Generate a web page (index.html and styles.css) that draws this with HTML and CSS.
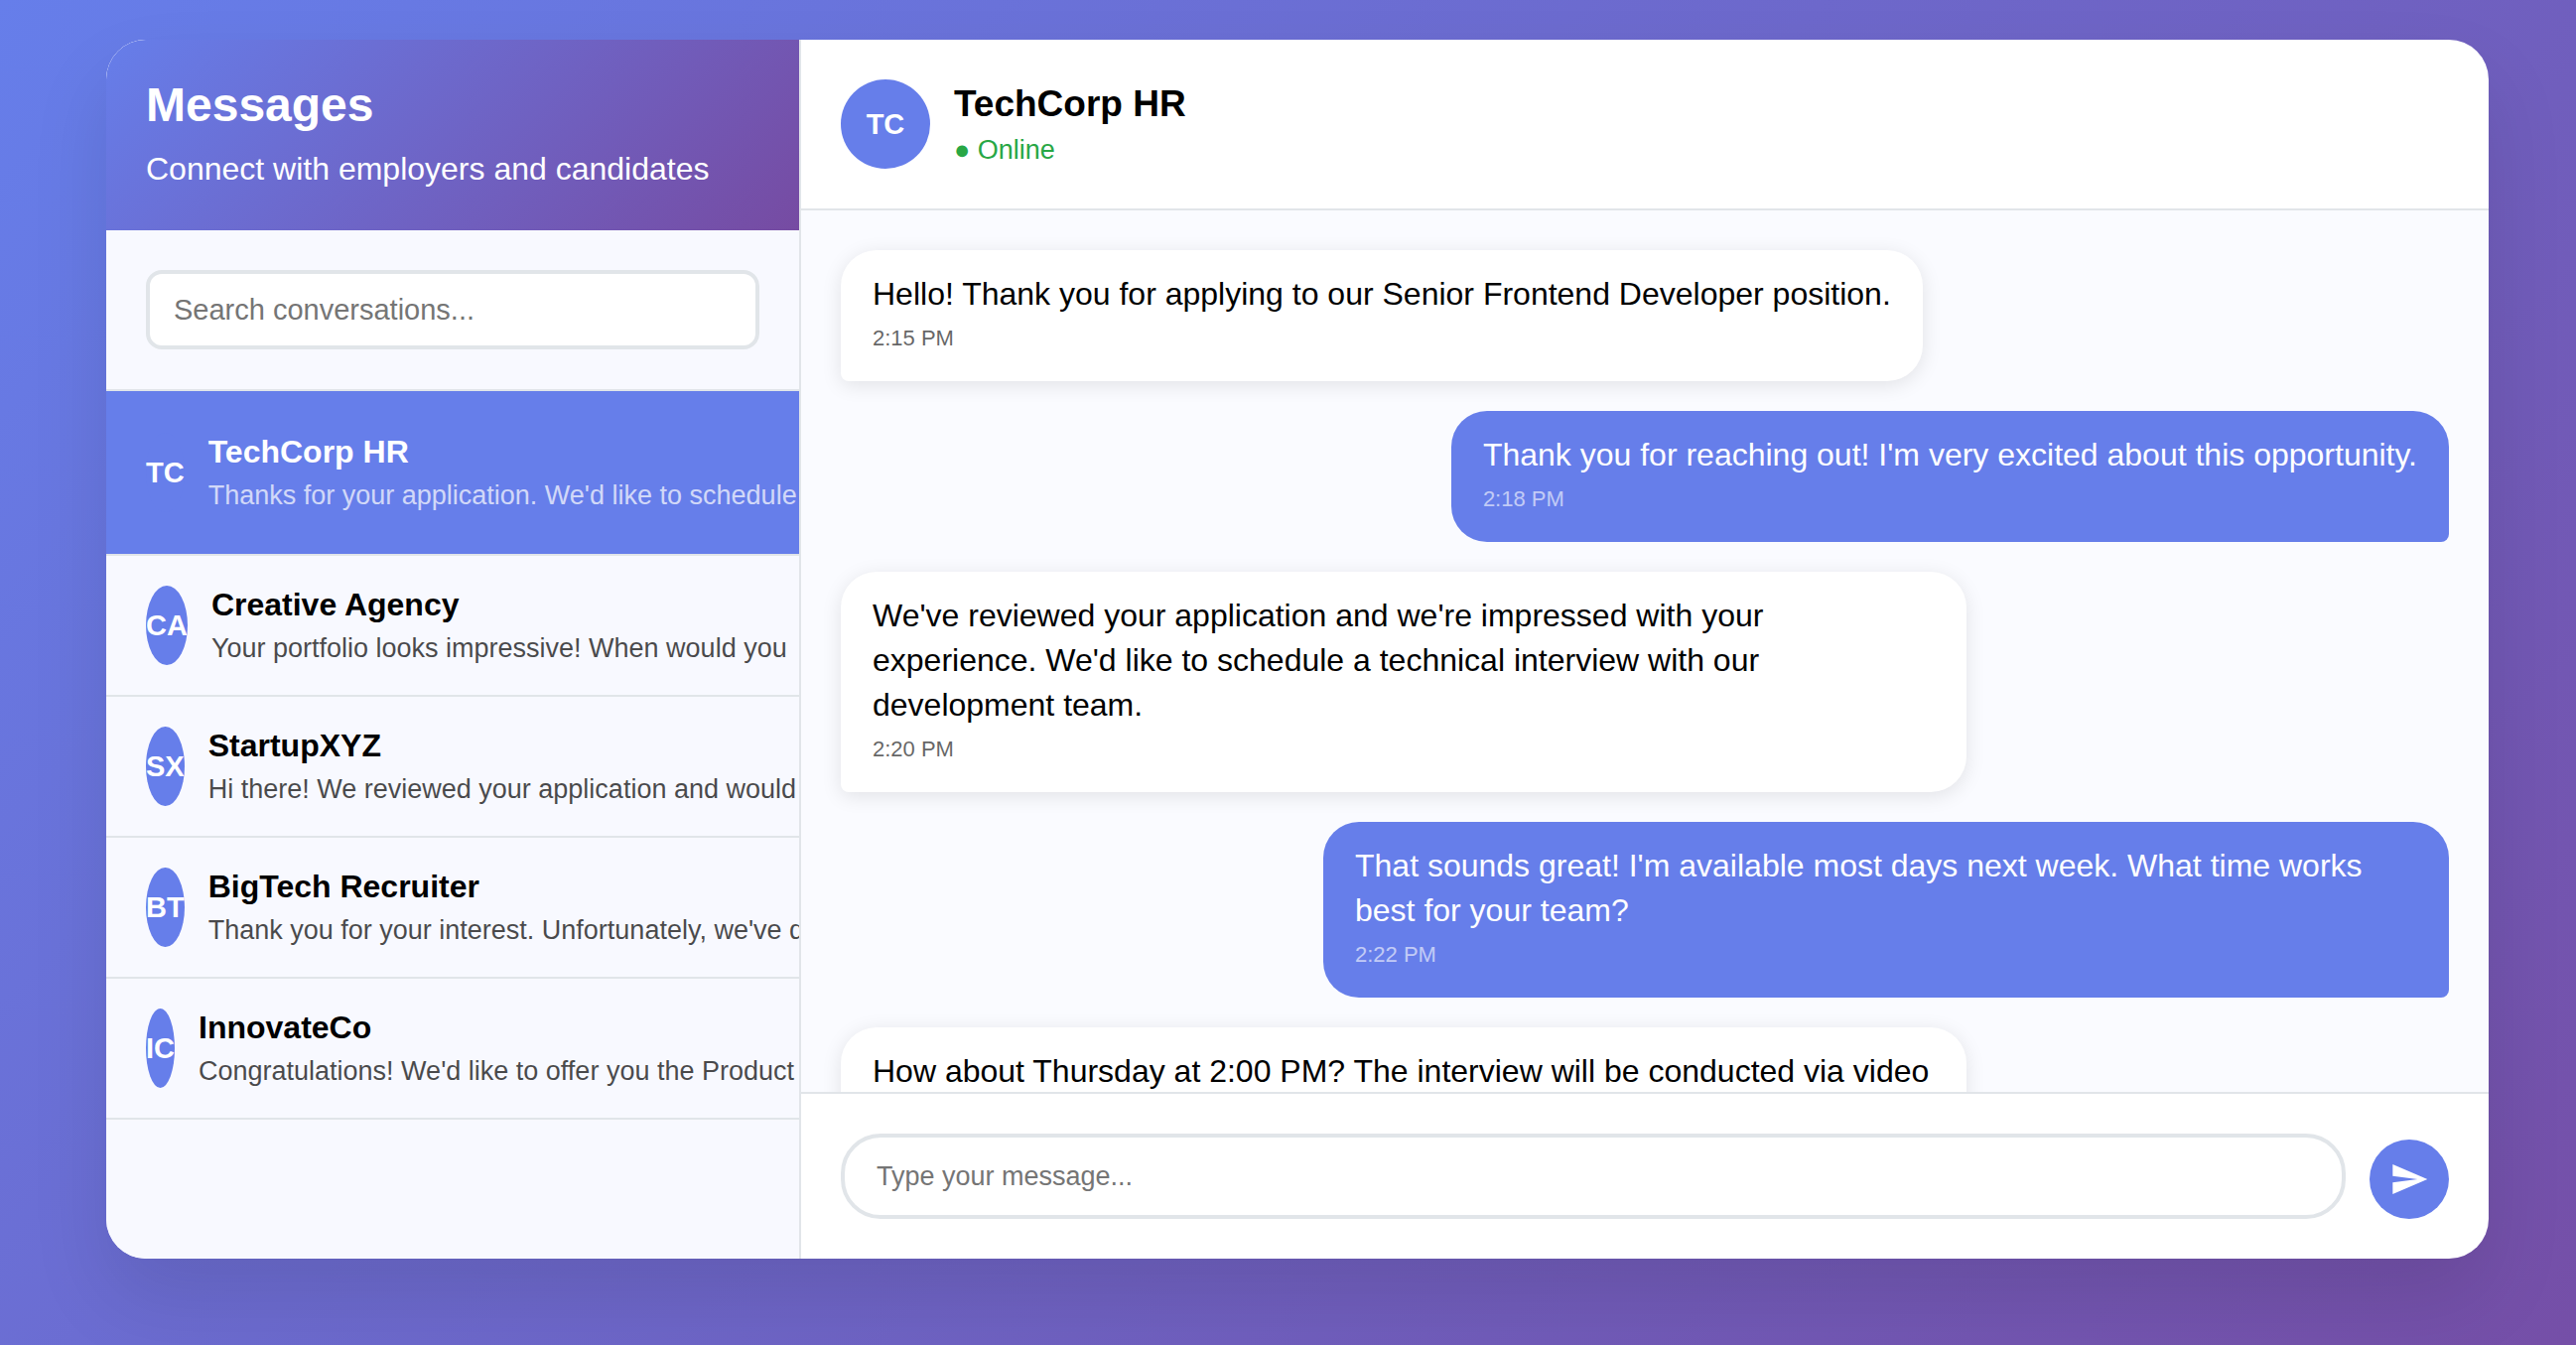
FILE: index.html
```html
<!DOCTYPE html>
<html lang="en">
<head>
  <meta charset="utf-8">
  <meta name="viewport" content="width=device-width, initial-scale=1">
  <title>Messages</title>
  <link rel="stylesheet" href="styles.css">
</head>
<body>
  <main class="messenger">
    <aside class="sidebar">
      <header class="sidebar-header">
        <h1 class="sidebar-title">Messages</h1>
        <p class="sidebar-subtitle">Connect with employers and candidates</p>
      </header>
      <div class="search">
        <input class="search-input" type="text" placeholder="Search conversations..." aria-label="Search conversations">
      </div>
      <ul class="conversations">
        <li>
          <button class="conversation conversation-active" type="button">
            <span class="avatar">TC</span>
            <span class="conversation-info">
              <span class="conversation-name">TechCorp HR</span>
              <span class="conversation-preview">Thanks for your application. We'd like to schedule</span>
            </span>
          </button>
        </li>
        <li>
          <button class="conversation" type="button">
            <span class="avatar">CA</span>
            <span class="conversation-info">
              <span class="conversation-name">Creative Agency</span>
              <span class="conversation-preview">Your portfolio looks impressive! When would you</span>
            </span>
          </button>
        </li>
        <li>
          <button class="conversation" type="button">
            <span class="avatar">SX</span>
            <span class="conversation-info">
              <span class="conversation-name">StartupXYZ</span>
              <span class="conversation-preview">Hi there! We reviewed your application and would</span>
            </span>
          </button>
        </li>
        <li>
          <button class="conversation" type="button">
            <span class="avatar">BT</span>
            <span class="conversation-info">
              <span class="conversation-name">BigTech Recruiter</span>
              <span class="conversation-preview">Thank you for your interest. Unfortunately, we've decided</span>
            </span>
          </button>
        </li>
        <li>
          <button class="conversation" type="button">
            <span class="avatar">IC</span>
            <span class="conversation-info">
              <span class="conversation-name">InnovateCo</span>
              <span class="conversation-preview">Congratulations! We'd like to offer you the Product</span>
            </span>
          </button>
        </li>
      </ul>
    </aside>

    <section class="chat">
      <header class="chat-header">
        <span class="avatar avatar-large">TC</span>
        <div class="chat-info">
          <h2 class="chat-name">TechCorp HR</h2>
          <p class="chat-status">● Online</p>
        </div>
      </header>

      <div class="messages">
        <div class="message message-received">
          <p class="message-text">Hello! Thank you for applying to our Senior Frontend Developer position.</p>
          <time class="message-time">2:15 PM</time>
        </div>
        <div class="message message-sent">
          <p class="message-text">Thank you for reaching out! I'm very excited about this opportunity.</p>
          <time class="message-time">2:18 PM</time>
        </div>
        <div class="message message-received">
          <p class="message-text">We've reviewed your application and we're impressed with your experience. We'd like to schedule a technical interview with our development team.</p>
          <time class="message-time">2:20 PM</time>
        </div>
        <div class="message message-sent">
          <p class="message-text">That sounds great! I'm available most days next week. What time works best for your team?</p>
          <time class="message-time">2:22 PM</time>
        </div>
        <div class="message message-received">
          <p class="message-text">How about Thursday at 2:00 PM? The interview will be conducted via video call.</p>
        </div>
      </div>

      <form class="composer">
        <textarea class="composer-input" rows="1" placeholder="Type your message..." aria-label="Message"></textarea>
        <button class="send-button" type="button" aria-label="Send message">
          <svg class="send-icon" viewBox="0 0 24 24" aria-hidden="true"><path d="M2.01 21L23 12 2.01 3 2 10l15 2-15 2z"/></svg>
        </button>
      </form>
    </section>
  </main>
</body>
</html>
```
FILE: styles.css
```css
* {
  box-sizing: border-box;
  margin: 0;
  padding: 0;
}

body {
  display: flex;
  justify-content: center;
  height: 100vh;
  padding: 40px 40px 87px 59px;
  background: linear-gradient(135deg, #667eea 0%, #764ba2 108%);
  color: #000;
  font-family: "Liberation Sans", Arial, sans-serif;
  font-size: 32px;
}

button,
input,
textarea {
  font-family: inherit;
}

.messenger {
  display: grid;
  grid-template-columns: 700px minmax(0, 1fr);
  grid-template-rows: minmax(0, 1fr);
  width: 100%;
  max-width: 2400px;
  overflow: hidden;
  border-radius: 40px;
  background: #fff;
  box-shadow: 0 40px 80px rgba(0, 0, 0, 0.1);
}

/* Sidebar */

.sidebar {
  display: flex;
  flex-direction: column;
  overflow: hidden;
  border-right: 2px solid #e1e5e9;
  background: #f8f9ff;
}

.sidebar-header {
  padding: 40px;
  background: linear-gradient(135deg, #667eea 0%, #764ba2 100%);
  color: #fff;
}

.sidebar-title {
  margin-bottom: 16px;
  font-size: 48px;
  line-height: 52px;
}

.sidebar-subtitle {
  line-height: 44px;
}

.search {
  padding: 40px;
  border-bottom: 2px solid #e1e5e9;
}

.search-input {
  display: block;
  width: 100%;
  height: 80px;
  padding: 0 24px;
  border: 4px solid #e1e5e9;
  border-radius: 16px;
  background: #fff;
  font-size: 29px;
}

.search-input::placeholder,
.composer-input::placeholder {
  color: #757575;
}

.conversations {
  list-style: none;
}

.conversation {
  display: flex;
  align-items: center;
  gap: 24px;
  width: 100%;
  padding: 30px 40px;
  border: 0;
  border-bottom: 2px solid #e1e5e9;
  background: none;
  color: inherit;
  font-size: 32px;
  text-align: left;
  cursor: pointer;
}

.conversation-active {
  padding-block: 42px;
  background: #667eea;
  color: #fff;
}

.avatar {
  display: flex;
  align-items: center;
  justify-content: center;
  width: 80px;
  height: 80px;
  border-radius: 50%;
  background: #667eea;
  color: #fff;
  font-size: 29px;
  font-weight: bold;
}

.avatar-large {
  width: 90px;
  height: 90px;
}

.conversation-info {
  display: flex;
  flex-direction: column;
  gap: 10px;
}

.conversation-name {
  font-weight: bold;
  line-height: 36px;
}

.conversation-preview {
  font-size: 27px;
  line-height: 32px;
  white-space: nowrap;
  opacity: 0.7;
}

/* The previews are nowrap, so the avatars shrink to their initials. */
.conversation .avatar {
  flex: 0 1000 80px;
}

/* Chat */

.chat {
  display: flex;
  flex-direction: column;
  overflow: hidden;
}

.chat-header {
  display: flex;
  align-items: center;
  gap: 24px;
  padding: 40px;
  border-bottom: 2px solid #e1e5e9;
}

.chat-info {
  display: flex;
  flex-direction: column;
  gap: 8px;
}

.chat-name {
  font-size: 37px;
  line-height: 44px;
}

.chat-status {
  color: #28a745;
  font-size: 27px;
  line-height: 32px;
}

.messages {
  display: flex;
  flex: 1;
  flex-direction: column;
  gap: 30px;
  min-height: 0;
  padding: 40px;
  overflow: hidden;
  background: #fafbff;
}

.message {
  flex-shrink: 0;
  max-width: 70%;
  padding: 22px 32px 28px;
  border-radius: 36px;
}

.message-received {
  align-self: flex-start;
  border-bottom-left-radius: 8px;
  background: #fff;
  box-shadow: 0 4px 20px rgba(0, 0, 0, 0.1);
}

.message-sent {
  align-self: flex-end;
  border-bottom-right-radius: 8px;
  background: #667eea;
  color: #fff;
}

.message-text {
  line-height: 45px;
}

.message-time {
  display: block;
  margin-top: 6px;
  font-size: 22px;
  line-height: 31px;
  opacity: 0.6;
}

.composer {
  display: flex;
  align-items: flex-end;
  gap: 24px;
  padding: 40px;
  border-top: 2px solid #e1e5e9;
}

.composer-input {
  flex: 1;
  min-width: 0;
  height: 86px;
  padding: 24px 32px;
  border: 4px solid #e1e5e9;
  border-radius: 40px;
  background: #fff;
  font-size: 27px;
  line-height: 30px;
  resize: none;
}

.send-button {
  display: flex;
  align-items: center;
  justify-content: center;
  width: 80px;
  height: 80px;
  border: 0;
  border-radius: 50%;
  background: #667eea;
  cursor: pointer;
}

.send-icon {
  width: 40px;
  height: 40px;
  fill: #fff;
}
```
